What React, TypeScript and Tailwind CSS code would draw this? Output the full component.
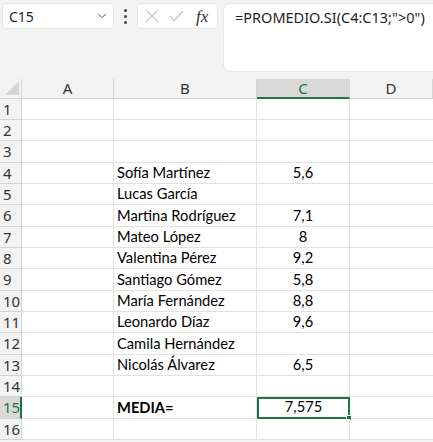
import { ChevronDown } from 'lucide-react';

const rows: { name?: string; value?: string; bold?: boolean }[] = [
    {},
    {},
    {},
    { name: 'Sofía Martínez', value: '5,6' },
    { name: 'Lucas García' },
    { name: 'Martina Rodríguez', value: '7,1' },
    { name: 'Mateo López', value: '8' },
    { name: 'Valentina Pérez', value: '9,2' },
    { name: 'Santiago Gómez', value: '5,8' },
    { name: 'María Fernández', value: '8,8' },
    { name: 'Leonardo Díaz', value: '9,6' },
    { name: 'Camila Hernández' },
    { name: 'Nicolás Álvarez', value: '6,5' },
    {},
    { name: 'MEDIA=', value: '7,575', bold: true },
    {},
];

const rowHeights = ['h-[21px]', 'h-[21px]', 'h-[22px]'];

const cellFont = { fontFamily: 'Lato, "Liberation Sans", sans-serif' };
const uiFont = { fontFamily: '"Noto Sans", "Open Sans", sans-serif' };

const App = () => {
    return (
        <div className="h-[442px] w-[433px] overflow-hidden bg-[#f3f3f3] text-[#1f1f1f]">
            {/* formula bar */}
            <div className="flex h-[79px] items-start pt-[4px] pl-[3px]">
                <div
                    className="flex h-[24px] w-[110px] items-center justify-between rounded-[4px] bg-white pr-[4px] pl-[6px] shadow-[0_0_0_1px_#e6e6e6]"
                    style={uiFont}
                >
                    <span className="text-[14px]">C15</span>
                    <ChevronDown size={14} strokeWidth={1.5} className="text-[#444]" />
                </div>
                <div className="flex h-[24px] w-[25px] flex-col items-center justify-center gap-[3px]">
                    <span className="h-[3px] w-[3px] rounded-full bg-[#444]" />
                    <span className="h-[3px] w-[3px] rounded-full bg-[#444]" />
                    <span className="h-[3px] w-[3px] rounded-full bg-[#444]" />
                </div>
                <div className="flex h-[24px] w-[79px] items-center rounded-[4px] bg-white pl-[7px] shadow-[0_0_0_1px_#e6e6e6]">
                    <svg width="14" height="14" viewBox="0 0 14 14" className="mr-[10px]">
                        <path d="M1 1 L13 13 M13 1 L1 13" stroke="#c4c4c4" strokeWidth="1.2" fill="none" />
                    </svg>
                    <svg width="15" height="12" viewBox="0 0 15 12" className="mr-[12px]">
                        <path d="M1 6 L5 10.5 L14 1" stroke="#c4c4c4" strokeWidth="1.2" fill="none" />
                    </svg>
                    <span
                        className="text-[17px] italic leading-none text-[#333]"
                        style={{ fontFamily: '"Liberation Serif", serif' }}
                    >
                        fx
                    </span>
                </div>
                <div
                    className="ml-[7px] h-[67px] flex-1 rounded-l-[6px] bg-white pt-[3px] pl-[11px] text-[14.5px] shadow-[0_0_0_1px_#e6e6e6]"
                    style={uiFont}
                >
                    =PROMEDIO.SI(C4:C13;"&gt;0")
                </div>
            </div>

            {/* sheet */}
            <div className="grid grid-cols-[22px_92px_143px_93px_1fr]">
                <div className="relative h-[20px] border-r border-b border-[#d4d4d4] bg-[#f3f3f3]">
                    <svg width="14" height="14" viewBox="0 0 14 14" className="absolute right-[2px] bottom-[3px]">
                        <path d="M14 0 L14 14 L0 14 Z" fill="#d6d6d6" />
                    </svg>
                </div>
                {['A', 'B', 'C', 'D'].map((c) => (
                    <div
                        key={c}
                        className={
                            c === 'C'
                                ? 'flex h-[20px] items-center justify-center border-r border-b-2 border-r-[#d4d4d4] border-b-[#217346] bg-[#d9d9d9] text-[15px] text-[#217346]'
                                : 'flex h-[20px] items-center justify-center border-r border-b border-[#d4d4d4] bg-[#f3f3f3] text-[15px] text-[#333]'
                        }
                        style={uiFont}
                    >
                        {c}
                    </div>
                ))}

                {rows.map((r, i) => {
                    const h = rowHeights[i % 3];
                    const n = i + 1;
                    const active = n === 15;
                    return [
                        <div
                            key={`h${n}`}
                            className={`${h} flex items-center pl-[3px] text-[15px] ${
                                active
                                    ? 'border-r-2 border-b border-r-[#217346] border-b-[#d4d4d4] bg-[#d9d9d9] text-[#217346]'
                                    : 'border-r border-b border-[#d4d4d4] bg-[#f3f3f3] text-[#333]'
                            }`}
                            style={uiFont}
                        >
                            {n}
                        </div>,
                        <div key={`a${n}`} className={`${h} border-r border-b border-[#e1e1e1] bg-white`} />,
                        <div
                            key={`b${n}`}
                            className={`${h} flex items-end border-r border-b border-[#e1e1e1] bg-white pl-[3px] text-[14.7px] text-black ${
                                r.bold ? 'font-bold' : ''
                            }`}
                            style={cellFont}
                        >
                            {r.name}
                        </div>,
                        <div
                            key={`c${n}`}
                            className={`${h} relative flex items-end justify-center bg-white text-[14.7px] text-black ${
                                active ? 'border-2 border-[#217346]' : 'border-r border-b border-[#e1e1e1]'
                            }`}
                            style={cellFont}
                        >
                            {r.value}
                            {active && (
                                <span className="absolute right-[-4px] bottom-[-4px] h-[6px] w-[6px] border border-white bg-[#217346]" />
                            )}
                        </div>,
                        <div key={`d${n}`} className={`${h} border-b border-[#e1e1e1] bg-white`} />,
                    ];
                })}
            </div>
        </div>
    );
};

export default App;
